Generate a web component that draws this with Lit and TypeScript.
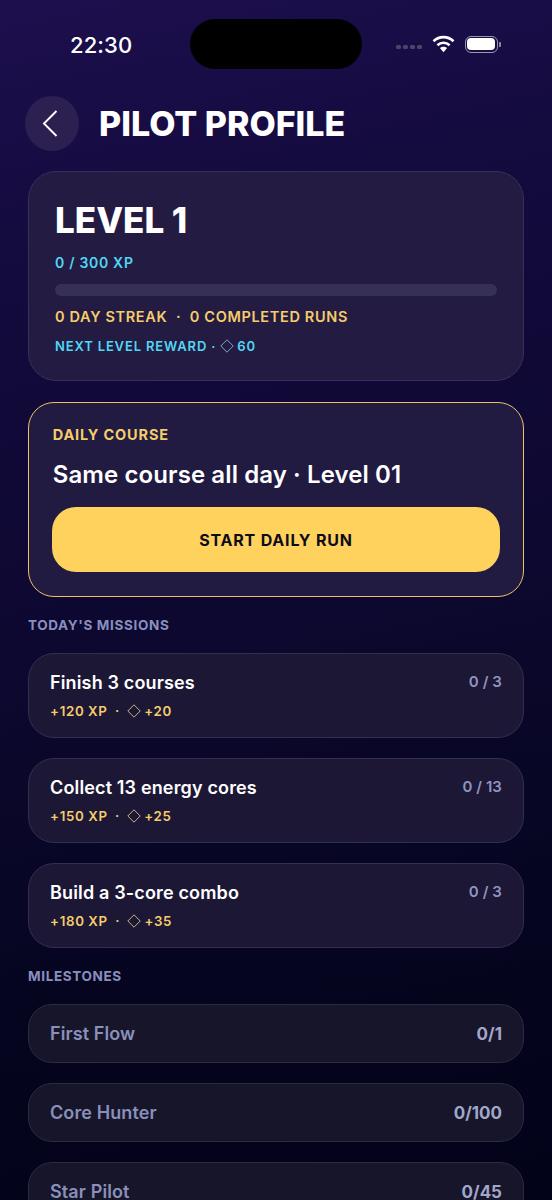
import { LitElement, html, css } from "lit";
import { customElement } from "lit/decorators.js";

const diamond = () => html`<svg class="dia" viewBox="0 0 14 14"><path d="M7 .8 13.2 7 7 13.2 .8 7Z" fill="none" stroke="currentColor" stroke-width="1"/></svg>`;

const missions = [
  { t: "Finish 3 courses", xp: "+120 XP", gem: "+20", p: "0 / 3" },
  { t: "Collect 13 energy cores", xp: "+150 XP", gem: "+25", p: "0 / 13" },
  { t: "Build a 3-core combo", xp: "+180 XP", gem: "+35", p: "0 / 3" },
];
const milestones = [
  { t: "First Flow", p: "0/1" },
  { t: "Core Hunter", p: "0/100" },
  { t: "Star Pilot", p: "0/45" },
];

@customElement("app-root")
export class AppRoot extends LitElement {
  static styles = css`
    :host {
      display: block;
      width: 552px;
      height: 1200px;
      overflow: hidden;
      font-family: Inter, "Liberation Sans", sans-serif;
      color: #fff;
      background: linear-gradient(168deg, #1d0f4e 0%, #140b3f 18%, #0d0830 50%, #05051f 78%, #020219 100%);
    }
    .status {
      height: 96px;
      box-sizing: border-box;
      padding-top: 19px;
      display: grid;
      grid-template-columns: 190px 172px 190px;
    }
    .time {
      font-size: 22px;
      font-weight: 500;
      letter-spacing: 0.1px;
      padding-left: 70px;
      line-height: 52px;
    }
    .island {
      height: 50px;
      border-radius: 25px;
      background: #000;
    }
    .sys {
      display: flex;
      align-items: center;
      height: 50px;
      padding-left: 34px;
    }
    .dots { display: flex; gap: 2.5px; margin-top: 6px; margin-right: 10px; }
    .dots i { width: 4.5px; height: 4.5px; border-radius: 1.5px; background: #4a4568; display: block; }
    .wifi { margin-right: 10px; }
    .batt {
      width: 33px;
      height: 17px;
      box-sizing: border-box;
      border: 1px solid #9a97b4;
      border-radius: 6px;
      padding: 1.5px;
    }
    .batt i { display: block; height: 100%; background: #fff; border-radius: 4px; }
    .nub { width: 1.5px; height: 5px; background: #8a87a4; margin-left: 1.5px; border-radius: 0 1px 1px 0; }
    .head {
      display: flex;
      align-items: center;
      height: 55px;
      padding-left: 25px;
      gap: 20px;
    }
    .back {
      width: 54px;
      height: 55px;
      border-radius: 50%;
      background: #2b2050;
      display: flex;
      align-items: center;
      justify-content: center;
    }
    .back svg { margin-right: 4px; }
    h1 {
      margin: 0;
      font-size: 34px;
      font-weight: 800;
      line-height: 55px;
    }
    main {
      padding: 20px 28px 0;
      display: flex;
      flex-direction: column;
    }
    .card {
      box-sizing: border-box;
      border: 1px solid #37305a;
      background: #231b42;
    }
    .profile {
      height: 210px;
      border-radius: 28px;
      padding: 28px 26px 0;
    }
    .level {
      font-size: 35px;
      font-weight: 800;
      line-height: 40px;
    }
    .xp {
      margin-top: 14px;
      font-size: 14px;
      font-weight: 600;
      letter-spacing: 0.7px;
      line-height: 18px;
      color: #52d6f4;
    }
    .bar {
      margin-top: 12px;
      width: 442px;
      height: 12px;
      border-radius: 6px;
      background: #373056;
    }
    .streak {
      margin-top: 11px;
      font-size: 14.5px;
      font-weight: 600;
      letter-spacing: 0.65px;
      line-height: 20px;
      color: #f5cd6b;
      white-space: pre;
    }
    .reward {
      margin-top: 10px;
      font-size: 13px;
      font-weight: 600;
      letter-spacing: 0.85px;
      line-height: 18px;
      color: #52d6f4;
      display: flex;
      align-items: center;
      white-space: pre;
    }
    .dia { flex: none; width: 14px; height: 14px; }
    .reward .dia { color: #7fa5c8; margin: 0 3px 0 4px; }
    .daily {
      margin-top: 21px;
      height: 195px;
      border-radius: 26px;
      border: 1.5px solid #ecc268;
      background: #211a41;
      padding: 22px 23px 0;
    }
    .daily-k {
      margin-left: 0.7px;
      font-size: 14.5px;
      font-weight: 700;
      letter-spacing: 0.85px;
      line-height: 19px;
      color: #f5cd6b;
    }
    .daily-t {
      margin-left: 0.7px;
      margin-top: 16px;
      font-size: 24px;
      font-weight: 600;
      letter-spacing: 0.1px;
      line-height: 30px;
    }
    .cta {
      margin-top: 17px;
      height: 65px;
      border-radius: 24px;
      background: #ffd25e;
      color: #0e0c18;
      font-size: 16px;
      font-weight: 700;
      letter-spacing: 0.8px;
      display: flex;
      align-items: center;
      justify-content: center;
    }
    .label {
      font-size: 13.5px;
      font-weight: 700;
      letter-spacing: 0.65px;
      line-height: 16px;
      color: #8a90be;
      margin-top: 20px;
      margin-bottom: 20px;
    }
    .mission {
      height: 85px;
      border-radius: 26px;
      background: #1d1736;
      border-color: #332d50;
      padding: 0 21px;
      display: flex;
      justify-content: space-between;
      margin-bottom: 20px;
    }
    .m-t {
      margin-top: 17px;
      font-size: 18px;
      font-weight: 600;
      letter-spacing: 0.15px;
      line-height: 24px;
    }
    .m-r {
      margin-top: 7px;
      font-size: 13.3px;
      font-weight: 600;
      letter-spacing: 0.7px;
      word-spacing: -0.4px;
      line-height: 18px;
      color: #f5cd6b;
      display: flex;
      align-items: center;
      white-space: pre;
    }
    .m-r .dia { color: #c8b27e; margin-right: 3px; }
    .m-p {
      margin-top: 17px;
      font-size: 15px;
      font-weight: 600;
      letter-spacing: 0.1px;
      line-height: 22px;
      color: #8f95bf;
    }
    .stone {
      height: 59px;
      flex: none;
      border-radius: 24px;
      background: #16152a;
      border-color: #2c2a44;
      padding: 0 21px;
      display: flex;
      align-items: center;
      justify-content: space-between;
      margin-bottom: 20px;
      font-size: 18px;
      font-weight: 600;
      letter-spacing: 0.1px;
      color: #8a90ba;
    }
    .stone b { font-size: 17px; font-weight: 700; letter-spacing: 0; color: #a2a7ca; }
    .label.second { margin-top: 0; margin-bottom: 20px; }
  `;

  render() {
    return html`
      <div class="status">
        <div class="time">22:30</div>
        <div class="island"></div>
        <div class="sys">
          <div class="dots"><i></i><i></i><i></i><i></i></div>
          <svg class="wifi" width="23" height="18" viewBox="0 0 23 18">
            <path d="M1.5 6.2C7.2.8 15.8.8 21.5 6.2" fill="none" stroke="#fff" stroke-width="2.6"/>
            <path d="M5.4 10.2c3.5-3.2 8.7-3.2 12.2 0" fill="none" stroke="#fff" stroke-width="2.6"/>
            <path d="M7.9 13.1c2.1-1.9 5.1-1.9 7.2 0l-3.6 4.2Z" fill="#fff"/>
          </svg>
          <div class="batt"><i></i></div>
          <div class="nub"></div>
        </div>
      </div>
      <div class="head">
        <div class="back">
          <svg width="16" height="27" viewBox="0 0 16 27"><path d="M14.5 1 2 13.5 14.5 26" fill="none" stroke="#fff" stroke-width="1.9"/></svg>
        </div>
        <h1>PILOT PROFILE</h1>
      </div>
      <main>
        <section class="card profile">
          <div class="level">LEVEL 1</div>
          <div class="xp">0 / 300 XP</div>
          <div class="bar"></div>
          <div class="streak">0 DAY STREAK  ·  0 COMPLETED RUNS</div>
          <div class="reward">NEXT LEVEL REWARD ·${diamond()}60</div>
        </section>
        <section class="card daily">
          <div class="daily-k">DAILY COURSE</div>
          <div class="daily-t">Same course all day · Level 01</div>
          <div class="cta">START DAILY RUN</div>
        </section>
        <div class="label">TODAY'S MISSIONS</div>
        ${missions.map(
          (m) => html`<div class="card mission">
            <div>
              <div class="m-t">${m.t}</div>
              <div class="m-r">${m.xp}  ·  ${diamond()}${m.gem}</div>
            </div>
            <div class="m-p">${m.p}</div>
          </div>`
        )}
        <div class="label second">MILESTONES</div>
        ${milestones.map(
          (m) => html`<div class="card stone"><span>${m.t}</span><b>${m.p}</b></div>`
        )}
      </main>
    `;
  }
}
